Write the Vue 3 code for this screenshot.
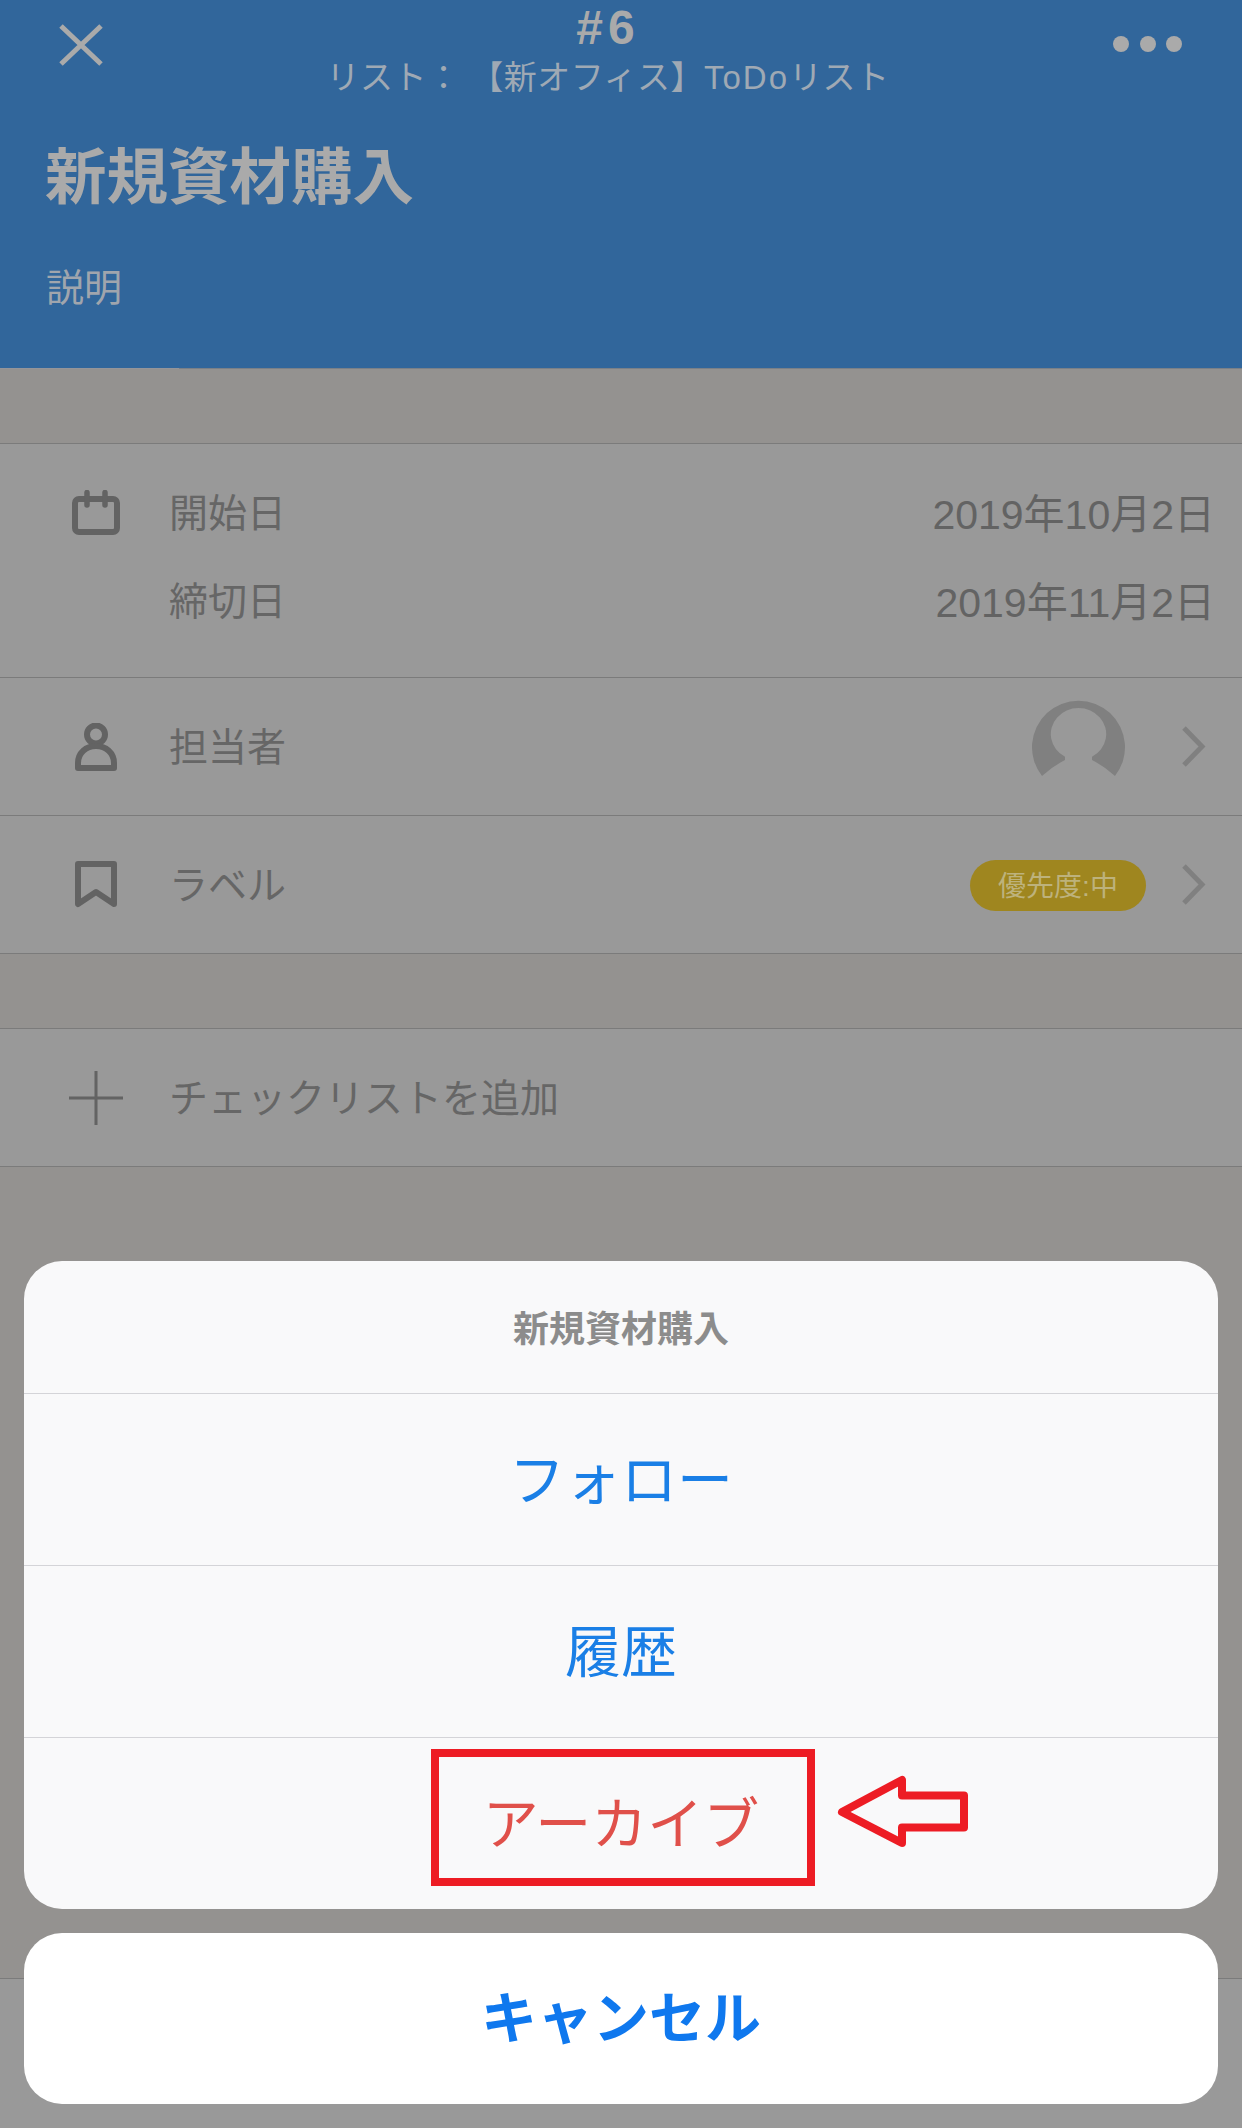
<template>
  <div class="page">
    <header class="head">
      <div class="topbar">
        <svg class="close" width="44" height="42" viewBox="0 0 44 42">
          <path d="M2 2 L42 40 M42 2 L2 40" fill="none" stroke="#aaaaaa" stroke-width="5" />
        </svg>
        <div class="center">
          <div class="num">#6</div>
          <div class="sub">リスト：&nbsp;【新オフィス】<span class="todo">ToDo</span>リスト</div>
        </div>
        <div class="dots"><span></span><span></span><span></span></div>
      </div>
      <h1 class="title">新規資材購入</h1>
      <div class="desc">説明</div>
    </header>

    <section class="group">
      <div class="row dates">
        <div class="ico cal">
          <svg width="48" height="45" viewBox="0 0 48 45">
            <rect x="3" y="9" width="42" height="33" rx="4" fill="none" stroke="#636363" stroke-width="6" />
            <path d="M15 2.5 V15 M33 2.5 V15" stroke="#636363" stroke-width="5.5" stroke-linecap="round" />
          </svg>
        </div>
        <div class="date-list">
          <div class="date-line" v-for="d in dates" :key="d.label">
            <span class="label">{{ d.label }}</span>
            <span class="date">{{ d.value }}</span>
          </div>
        </div>
      </div>
      <div class="row">
        <div class="ico">
          <svg width="42" height="48" viewBox="0 0 42 48">
            <circle cx="21" cy="11.5" r="9" fill="none" stroke="#636363" stroke-width="6" />
            <path d="M3 45 V40 C3 30 11 23 21 23 C31 23 39 30 39 40 V45 Z" fill="none" stroke="#636363" stroke-width="6" stroke-linejoin="round" />
          </svg>
        </div>
        <span class="label">担当者</span>
        <svg class="avatar" width="93" height="93" viewBox="0 0 93 93">
          <path d="M10 76 A46.5 46.5 0 1 1 83 76 Q72 66 60 60 L60 56.7 A27.7 26 0 1 0 33 56.7 L33 60 Q21 66 10 76 Z" fill="#808080" />
        </svg>
        <svg class="chev" width="27" height="45" viewBox="0 0 27 45">
          <path d="M4 4 L22 22.5 L4 41" fill="none" stroke="#808080" stroke-width="5" />
        </svg>
      </div>
      <div class="row">
        <div class="ico">
          <svg width="42" height="48" viewBox="0 0 42 48">
            <path d="M3 3 H39 V43 L21 31 L3 43 Z" fill="none" stroke="#636363" stroke-width="6" stroke-linejoin="round" />
          </svg>
        </div>
        <span class="label">ラベル</span>
        <span class="tag">優先度:中</span>
        <svg class="chev" width="27" height="45" viewBox="0 0 27 45">
          <path d="M4 4 L22 22.5 L4 41" fill="none" stroke="#808080" stroke-width="5" />
        </svg>
      </div>
    </section>

    <section class="group second">
      <div class="row">
        <div class="ico">
          <svg width="54" height="54" viewBox="0 0 54 54">
            <path d="M0 27 H54 M27 0 V54" stroke="#636363" stroke-width="3" />
          </svg>
        </div>
        <span class="label">チェックリストを追加</span>
      </div>
    </section>

    <div class="spacer"></div>
    <div class="bottom"></div>

    <div class="sheet">
      <div class="card">
        <div class="sheet-title">新規資材購入</div>
        <div class="option" v-for="o in options" :key="o">{{ o }}</div>
        <div class="option danger">
          アーカイブ
          <div class="mark"></div>
          <svg class="arrow" width="136" height="80" viewBox="0 0 136 80">
            <polygon points="10,40 70,8 70,23.5 132,23.5 132,55.5 70,55.5 70,71" fill="none" stroke="#ed1c24" stroke-width="8" stroke-linejoin="round" />
          </svg>
        </div>
      </div>
      <div class="cancel">キャンセル</div>
    </div>
  </div>
</template>

<script setup>
const dates = [
  { label: '開始日', value: '2019年10月2日' },
  { label: '締切日', value: '2019年11月2日' }
]
const options = ['フォロー', '履歴']
</script>

<style>
html, body {
  margin: 0;
  background: #949290;
}
</style>

<style scoped>
.page {
  position: relative;
  width: 1242px;
  height: 2128px;
  overflow: hidden;
  display: flex;
  flex-direction: column;
  background: #949290;
  font-family: "Liberation Sans", "Noto Sans CJK JP", sans-serif;
  color: #666666;
}

/* ヘッダー */
.head {
  box-sizing: border-box;
  height: 369px;
  flex: none;
  background: #31669b;
  border-bottom: 1px solid;
  border-image: linear-gradient(to right, #94959a 180px, #7a8088 180px) 1;
  color: #aaaaaa;
}
.topbar {
  display: grid;
  grid-template-columns: 44px 1fr 69px;
  padding: 0 60px 0 59px;
  align-items: start;
}
.close {
  margin-top: 24px;
}
.center {
  text-align: center;
}
.num {
  font-size: 48px;
  line-height: 56px;
  font-weight: 700;
  letter-spacing: 5px;
}
.sub {
  font-size: 33px;
  line-height: 43px;
  letter-spacing: 0.5px;
  color: #9fa9b4;
}
.todo {
  letter-spacing: 2px;
}
.dots {
  margin-top: 36px;
  display: flex;
  justify-content: space-between;
}
.dots span {
  width: 16px;
  height: 16px;
  border-radius: 50%;
  background: #aaaaaa;
}
.title {
  margin: 43px 0 0 45px;
  font-size: 61.5px;
  line-height: 72px;
  font-weight: 700;
}
.desc {
  margin: 50px 0 0 46px;
  font-size: 38px;
  line-height: 48px;
  color: #a0a5ad;
}

/* リスト */
.group {
  flex: none;
  margin-top: 74px;
  background: #999999;
  border-top: 1px solid #7b7b7b;
}
.row {
  box-sizing: border-box;
  height: 138px;
  display: flex;
  align-items: center;
  border-bottom: 1px solid #7b7b7b;
  padding-right: 35px;
}
.ico {
  width: 100px;
  margin: 0 23px 0 46px;
  flex: none;
  display: flex;
  justify-content: center;
}
.label {
  font-size: 39px;
  line-height: 48px;
  padding-top: 2px;
  flex: 1;
}
.dates {
  height: 234px;
  align-items: flex-start;
  padding: 25px 27px 0 0;
}
.cal {
  margin-top: 21px;
}
.date-list {
  flex: 1;
}
.date-line {
  height: 88px;
  display: flex;
  align-items: center;
}
.date {
  font-size: 41px;
  padding-bottom: 5px;
  color: #636363;
}
.avatar {
  margin-right: 55px;
}
.chev {
  flex: none;
}
.tag {
  width: 176px;
  height: 51px;
  margin: 2px 34px 0 0;
  border-radius: 26px;
  background: #9f861f;
  color: #bdb27c;
  font-size: 28px;
  line-height: 53px;
  text-align: center;
}
.spacer {
  flex: 1;
}
.bottom {
  flex: none;
  height: 149px;
  background: #999999;
  border-top: 1px solid #7b7b7b;
}

/* アクションシート */
.sheet {
  position: absolute;
  left: 24px;
  right: 24px;
  bottom: 24px;
  display: flex;
  flex-direction: column;
  gap: 24px;
}
.card {
  border-radius: 38px;
  background: #f9f9fa;
}
.sheet-title {
  height: 132px;
  line-height: 138px;
  text-align: center;
  font-size: 36px;
  font-weight: 700;
  color: #8c8c8c;
}
.option {
  position: relative;
  box-sizing: border-box;
  height: 172px;
  line-height: 174px;
  text-align: center;
  font-size: 56px;
  color: #1a7fe6;
  border-top: 1px solid #d4d4d8;
}
.danger {
  color: #e0504a;
}
.mark {
  position: absolute;
  left: 407px;
  top: 11px;
  box-sizing: border-box;
  width: 384px;
  height: 137px;
  border: 8px solid #ed1c24;
}
.arrow {
  position: absolute;
  left: 808px;
  top: 34px;
}
.cancel {
  height: 171px;
  line-height: 172px;
  border-radius: 38px;
  background: #ffffff;
  text-align: center;
  font-size: 56px;
  font-weight: 700;
  color: #0f78ee;
}
</style>
